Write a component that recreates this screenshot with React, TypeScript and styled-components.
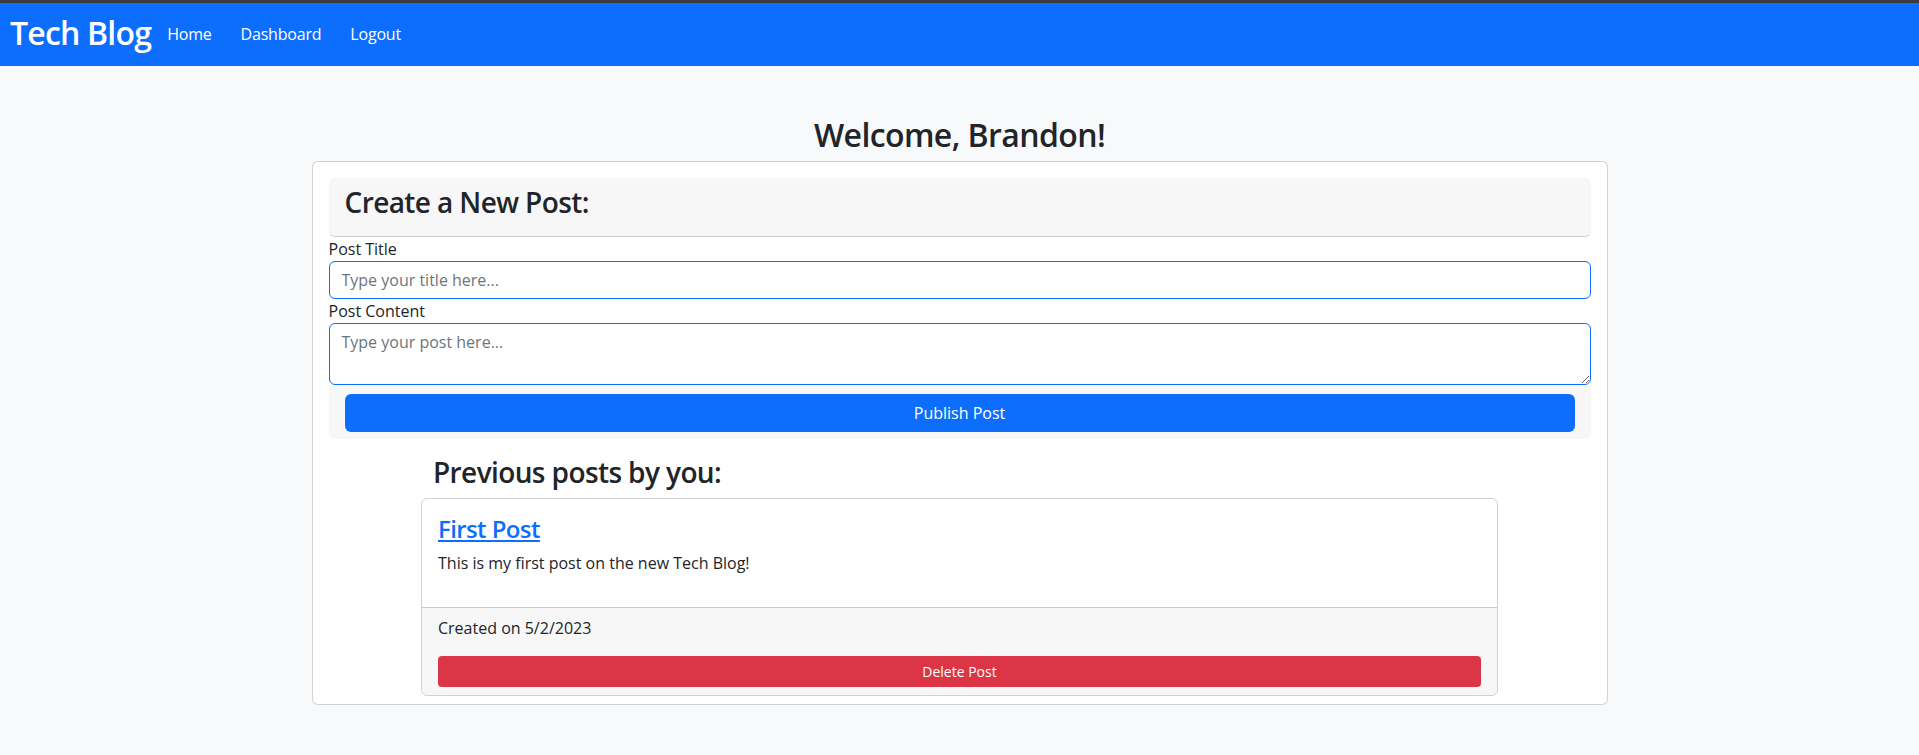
import React from "react";
import styled, { createGlobalStyle } from "styled-components";

const GlobalStyle = createGlobalStyle`
  body {
    margin: 0;
    background: #f8f9fa;
    color: #212529;
    font-family: "Open Sans", "Liberation Sans", sans-serif;
    font-size: 16px;
    line-height: 1.5;
  }
  * {
    box-sizing: border-box;
  }
`;

const TopStrip = styled.div`
  height: 3px;
  background: #3b3b3b;
`;

const NavBar = styled.nav`
  height: 63px;
  background: #0d6efd;
  display: flex;
  align-items: center;
  padding: 0 12px 2px 10px;
`;

const Brand = styled.a`
  color: #fff;
  font-size: 32px;
  font-weight: 600;
  line-height: 1.2;
  letter-spacing: -0.8px;
  text-decoration: none;
  margin-right: 8px;
`;

const NavLinks = styled.div`
  display: flex;
  align-items: center;
`;

const NavLink = styled.a`
  color: #fff;
  font-size: 16px;
  letter-spacing: -0.2px;
  text-decoration: none;
  padding: 8px;
  margin-right: 13px;
`;

const Container = styled.main`
  width: 1296px;
  margin: 0 auto;
`;

const Welcome = styled.h2`
  font-size: 32px;
  font-weight: 600;
  line-height: 1.2;
  letter-spacing: -0.6px;
  text-align: center;
  margin: 50px 0 7px;
`;

const Card = styled.section`
  background: #fff;
  border: 1px solid rgba(0, 0, 0, 0.175);
  border-radius: 6px;
  padding: 16px 16px 8px;
`;

const FormHeader = styled.div`
  background: rgba(0, 0, 0, 0.03);
  border-bottom: 1px solid rgba(0, 0, 0, 0.175);
  border-radius: 6px;
  padding: 8px 16px;
`;

const SectionTitle = styled.h3<{ $indent?: number }>`
  font-size: 28px;
  font-weight: 600;
  line-height: 1.2;
  letter-spacing: -0.6px;
  margin: 0 0 8px;
  padding-left: ${(p) => p.$indent ?? 0}px;
`;

const Label = styled.label`
  display: block;
  font-size: 16px;
  line-height: 24px;
`;

const TextInput = styled.input`
  display: block;
  width: 100%;
  height: 38px;
  padding: 6px 12px;
  font: inherit;
  color: #212529;
  background: #fff;
  border: 1px solid #0d6efd;
  border-radius: 6px;
  outline: none;

  &::placeholder {
    color: #6c757d;
  }
`;

const TextArea = styled.textarea`
  display: block;
  width: 100%;
  height: 62px;
  padding: 6px 12px;
  font: inherit;
  line-height: 24px;
  color: #212529;
  background: #fff;
  border: 1px solid #0d6efd;
  border-radius: 6px;
  outline: none;
  resize: vertical;

  &::placeholder {
    color: #6c757d;
  }
`;

const FormFooter = styled.div`
  background: rgba(0, 0, 0, 0.03);
  border-radius: 0 0 6px 6px;
  padding: 9px 16px 7px;
`;

const Button = styled.button<{ $variant: "primary" | "danger"; $small?: boolean }>`
  display: block;
  width: 100%;
  height: ${(p) => (p.$small ? 31 : 38)}px;
  font-family: inherit;
  font-size: ${(p) => (p.$small ? 14 : 16)}px;
  color: #fff;
  border: 1px solid transparent;
  border-radius: ${(p) => (p.$small ? 4 : 6)}px;
  background: ${(p) => (p.$variant === "primary" ? "#0d6efd" : "#dc3545")};
  cursor: pointer;
`;

const Posts = styled.div`
  width: 1077px;
  margin: 17px auto 0;
`;

const PostCard = styled.article`
  border: 1px solid rgba(0, 0, 0, 0.175);
  border-radius: 6px;
  overflow: hidden;
`;

const PostBody = styled.div`
  padding: 16px;
`;

const PostTitle = styled.h4`
  font-size: 24px;
  font-weight: 600;
  line-height: 1.2;
  letter-spacing: -0.6px;
  margin: 0 0 8px;

  a {
    color: #0d6efd;
    text-decoration: underline;
  }
`;

const Text = styled.p`
  margin: 0 0 16px;
`;

const PostFooter = styled.div`
  background: rgba(0, 0, 0, 0.03);
  border-top: 1px solid rgba(0, 0, 0, 0.175);
  padding: 8px 16px;
`;

const navItems = ["Home", "Dashboard", "Logout"];

export default function App() {
  return (
    <>
      <GlobalStyle />
      <TopStrip />
      <NavBar>
        <Brand href="#">Tech Blog</Brand>
        <NavLinks>
          {navItems.map((item) => (
            <NavLink key={item} href="#">
              {item}
            </NavLink>
          ))}
        </NavLinks>
      </NavBar>
      <Container>
        <Welcome>Welcome, Brandon!</Welcome>
        <Card>
          <form onSubmit={(e) => e.preventDefault()}>
            <FormHeader>
              <SectionTitle>Create a New Post:</SectionTitle>
            </FormHeader>
            <Label htmlFor="post-title">Post Title</Label>
            <TextInput id="post-title" placeholder="Type your title here..." />
            <Label htmlFor="post-content">Post Content</Label>
            <TextArea id="post-content" rows={2} placeholder="Type your post here..." />
            <FormFooter>
              <Button $variant="primary" type="submit">
                Publish Post
              </Button>
            </FormFooter>
          </form>
          <Posts>
            <SectionTitle $indent={12}>Previous posts by you:</SectionTitle>
            <PostCard>
              <PostBody>
                <PostTitle>
                  <a href="#">First Post</a>
                </PostTitle>
                <Text>This is my first post on the new Tech Blog!</Text>
              </PostBody>
              <PostFooter>
                <Text>Created on 5/2/2023</Text>
                <Button $variant="danger" $small>
                  Delete Post
                </Button>
              </PostFooter>
            </PostCard>
          </Posts>
        </Card>
      </Container>
    </>
  );
}
